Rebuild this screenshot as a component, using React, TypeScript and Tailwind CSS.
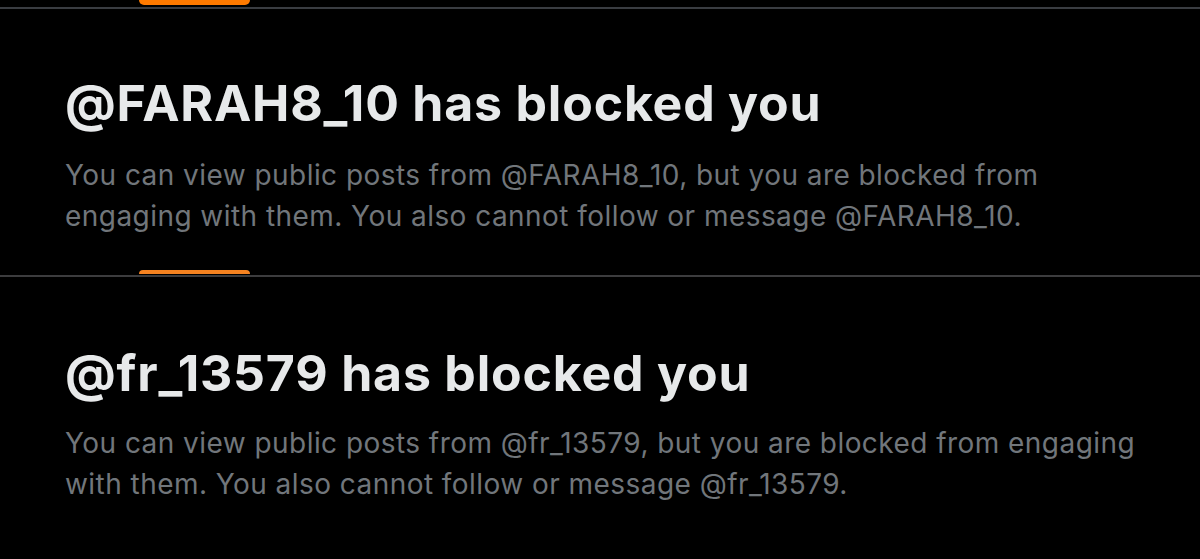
import React from "react";

type Block = { handle: string };

const blocks: Block[] = [{ handle: "@FARAH8_10" }, { handle: "@fr_13579" }];

function BlockedNotice({ handle, first }: { handle: string; first: boolean }) {
  return (
    <section className={first ? "pb-[33px]" : "pb-10"}>
      <div className={first ? "h-[5px]" : "h-[4px]"}>
        <div
          className={
            first
              ? "ml-[139px] w-[111px] h-[5px] bg-[#ff7a00] rounded-b-full"
              : "ml-[139px] w-[111px] h-[4px] bg-[#f58220] rounded-t-full"
          }
        />
      </div>
      <div className={first ? "mt-[2px] h-[2px] bg-[#3a3d42]" : "mt-[1px] h-[2px] bg-[#3c3c3e]"} />
      <div className={first ? "pl-[65px] pt-[66px] w-[1140px]" : "pl-[65px] pt-[68px] w-[1140px]"}>
        <h1 className="text-[50px] leading-[56px] font-bold text-[#e7e9ea] tracking-[0.8px]">
          {handle} has blocked you
        </h1>
        <p
          className={
            first
              ? "mt-[24px] text-[28px] leading-[41px] text-[#71767b] tracking-[0.45px]"
              : "mt-[22px] text-[28px] leading-[41px] text-[#71767b] tracking-[0.45px]"
          }
        >
          You can view public posts from {handle}, but you are blocked from engaging with them. You also
          cannot follow or message {handle}.
        </p>
      </div>
    </section>
  );
}

export default function App() {
  return (
    <main
      className="w-[1200px] h-[559px] overflow-hidden bg-black"
      style={{ fontFamily: "Inter, 'Noto Sans', sans-serif" }}
    >
      {blocks.map((b, i) => (
        <BlockedNotice key={b.handle} handle={b.handle} first={i === 0} />
      ))}
    </main>
  );
}
